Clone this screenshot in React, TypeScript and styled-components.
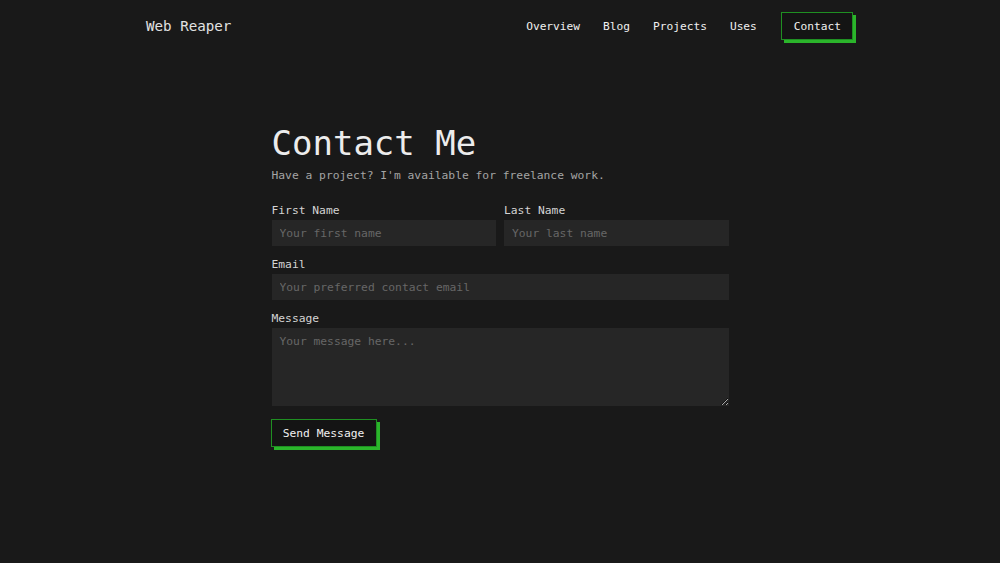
import React from "react";
import styled, { createGlobalStyle } from "styled-components";

const Global = createGlobalStyle`
  html, body { margin: 0; padding: 0; background: #191919; }
  body { font-family: "DejaVu Sans Mono", "Liberation Mono", monospace; color: #e6e6e6; }
  * { box-sizing: border-box; }
`;

const Page = styled.div`
  min-height: 563px;
  background: #191919;
`;

const Header = styled.header`
  width: 710px;
  margin: 0 auto;
  padding-top: 12px;
  display: flex;
  align-items: center;
  justify-content: space-between;
`;

const Brand = styled.div`
  font-size: 14.2px;
  color: #e2e2e2;
  margin-left: 1px;
`;

const Nav = styled.nav`
  display: flex;
  align-items: center;
  gap: 23px;
`;

const NavLink = styled.a<{ $active?: boolean }>`
  font-size: 11.2px;
  font-weight: 400;
  color: #f0f0f0;
  text-decoration: none;
  height: 28px;
  display: flex;
  align-items: center;
  padding: ${(p) => (p.$active ? "1px 11px 0 12px" : "1px 0 0")};
  border: ${(p) => (p.$active ? "1px solid #1f8f22" : "none")};
  background: ${(p) => (p.$active ? "#141414" : "transparent")};
  box-shadow: ${(p) => (p.$active ? "3px 3px 0 #2bb52b" : "none")};
  margin-right: ${(p) => (p.$active ? "2px" : "0")};
  margin-left: ${(p) => (p.$active ? "1px" : "0")};
`;

const Main = styled.main`
  width: 457px;
  margin: 0 auto;
  padding-top: 83px;
`;

const Title = styled.h1`
  margin: 0;
  font-size: 34px;
  font-weight: 500;
  line-height: 40px;
  color: #ececec;
`;

const Subtitle = styled.p`
  margin: 6px 0 0;
  font-size: 11.3px;
  color: #a4a4a4;
`;

const Form = styled.form`
  margin-top: 22px;
  display: flex;
  flex-direction: column;
  gap: 12px;
`;

const Row = styled.div`
  display: grid;
  grid-template-columns: 1fr 1fr;
  gap: 8px;
`;

const Field = styled.label`
  display: flex;
  flex-direction: column;
  gap: 2px;
`;

const LabelText = styled.span`
  font-size: 11.3px;
  line-height: 14px;
  color: #d4d4d4;
`;

const Input = styled.input`
  height: 26px;
  border: none;
  outline: none;
  background: #262626;
  color: #ddd;
  padding: 0 8px;
  font-family: inherit;
  font-size: 11.3px;
  &::placeholder { color: #676767; }
`;

const TextArea = styled.textarea`
  height: 78px;
  border: none;
  outline: none;
  background: #262626;
  color: #ddd;
  padding: 7px 8px;
  font-family: inherit;
  font-size: 11.3px;
  resize: vertical;
  &::placeholder { color: #676767; }
`;

const Submit = styled.button`
  align-self: flex-start;
  margin-top: 1px;
  margin-left: -1px;
  height: 28px;
  width: 106px;
  padding: 0;
  border: 1px solid #1f8f22;
  background: #141414;
  box-shadow: 3px 3px 0 #2bb52b;
  color: #f0f0f0;
  font-family: inherit;
  font-size: 11.3px;
  font-weight: 400;
`;

export default function App() {
  return (
    <Page>
      <Global />
      <Header>
        <Brand>Web Reaper</Brand>
        <Nav>
          <NavLink>Overview</NavLink>
          <NavLink>Blog</NavLink>
          <NavLink>Projects</NavLink>
          <NavLink>Uses</NavLink>
          <NavLink $active>Contact</NavLink>
        </Nav>
      </Header>
      <Main>
        <Title>Contact Me</Title>
        <Subtitle>Have a project? I'm available for freelance work.</Subtitle>
        <Form onSubmit={(e) => e.preventDefault()}>
          <Row>
            <Field>
              <LabelText>First Name</LabelText>
              <Input placeholder="Your first name" />
            </Field>
            <Field>
              <LabelText>Last Name</LabelText>
              <Input placeholder="Your last name" />
            </Field>
          </Row>
          <Field>
            <LabelText>Email</LabelText>
            <Input placeholder="Your preferred contact email" />
          </Field>
          <Field>
            <LabelText>Message</LabelText>
            <TextArea placeholder="Your message here..." />
          </Field>
          <Submit type="submit">Send Message</Submit>
        </Form>
      </Main>
    </Page>
  );
}
